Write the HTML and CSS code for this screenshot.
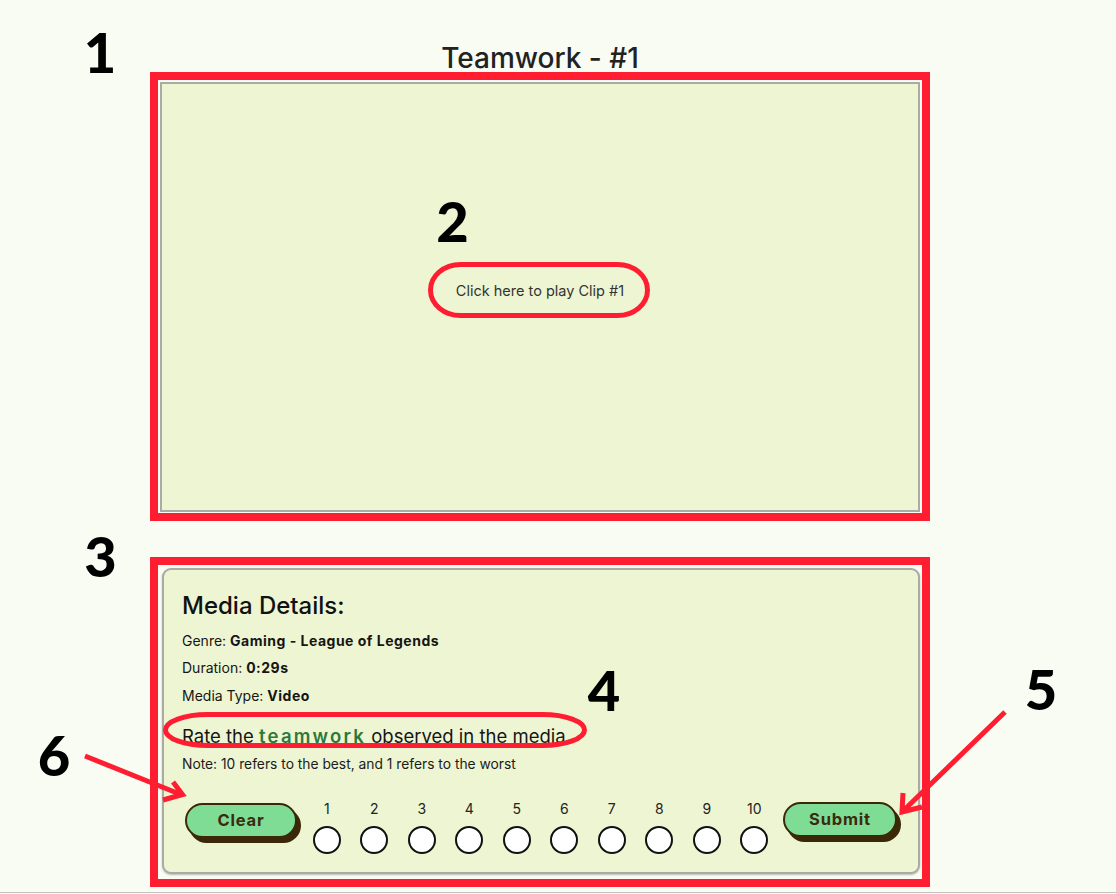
FILE: index.html
```html
<!DOCTYPE html>
<html lang="en">
<head>
<meta charset="utf-8">
<title>Teamwork - #1</title>
<link rel="stylesheet" href="styles.css">
</head>
<body>
<div class="page">
  <main class="column">
    <h1 class="title">Teamwork - #1</h1>

    <section class="frame frame-video">
      <div class="video-panel">
        <button class="play-btn" type="button">Click here to play Clip #1</button>
      </div>
    </section>

    <section class="frame frame-details">
      <div class="details-panel">
        <h2 class="details-title">Media Details:</h2>
        <p class="meta">Genre: <b>Gaming - League of Legends</b></p>
        <p class="meta">Duration: <b>0:29s</b></p>
        <p class="meta">Media Type: <b>Video</b></p>
        <p class="rate">Rate the <span class="accent">teamwork</span> observed in the media</p>
        <p class="note">Note: 10 refers to the best, and 1 refers to the worst</p>

        <div class="rating-row">
          <button class="pill pill-clear" type="button">Clear</button>
          <div class="scale">
            <label class="opt"><span class="num">1</span><span class="dot"></span></label>
            <label class="opt"><span class="num">2</span><span class="dot"></span></label>
            <label class="opt"><span class="num">3</span><span class="dot"></span></label>
            <label class="opt"><span class="num">4</span><span class="dot"></span></label>
            <label class="opt"><span class="num">5</span><span class="dot"></span></label>
            <label class="opt"><span class="num">6</span><span class="dot"></span></label>
            <label class="opt"><span class="num">7</span><span class="dot"></span></label>
            <label class="opt"><span class="num">8</span><span class="dot"></span></label>
            <label class="opt"><span class="num">9</span><span class="dot"></span></label>
            <label class="opt"><span class="num">10</span><span class="dot"></span></label>
          </div>
          <button class="pill pill-submit" type="button">Submit</button>
        </div>
      </div>
    </section>
  </main>

  <svg class="annotations" width="1116" height="894" viewBox="0 0 1116 894" xmlns="http://www.w3.org/2000/svg">
    <g class="marks">
      <rect x="430.5" y="264.5" width="217" height="51" rx="30" ry="25.5"/>
      <rect x="165.5" y="714.5" width="419" height="31" rx="42" ry="15.5"/>
      <path d="M85 756 L182 795 M173 782 L182.5 794.5 L163 800"/>
      <path d="M1005 712 L902 812 M903 793 L902 812 L922 807"/>
    </g>
    <g class="labels">
      <text x="100" y="73">1</text>
      <text x="452.5" y="242">2</text>
      <text x="100.5" y="577">3</text>
      <text x="604" y="711">4</text>
      <text x="1041" y="710">5</text>
      <text x="54" y="776">6</text>
    </g>
  </svg>
</div>
</body>
</html>
```

FILE: styles.css
```css
* { box-sizing: border-box; }

html, body {
  margin: 0;
  padding: 0;
  background: #f9fcf2;
}

body {
  font-family: Inter, "Noto Sans", "Liberation Sans", sans-serif;
  color: #1b1b1b;
}

.page {
  position: relative;
  height: 894px;
  overflow: hidden;
}

.page::after {
  content: "";
  position: absolute;
  left: 0;
  right: 0;
  top: 892px;
  height: 1px;
  background: #c2c4bd;
}

.column {
  width: 780px;
  margin-left: 150px;
}

.title {
  margin: 0;
  padding-top: 46px;
  height: 72px;
  font-size: 28px;
  line-height: 24px;
  font-weight: 500;
  text-align: center;
  color: #222;
}

.frame {
  border: 8px solid #ff1e31;
}

.frame-video {
  padding: 2px 2px 1px 2px;
}

.video-panel {
  height: 430px;
  background: #eef5d2;
  border: 2px solid #a9aba4;
  display: flex;
  align-items: center;
  justify-content: center;
  padding-bottom: 14px;
}

.play-btn {
  background: none;
  border: 0;
  padding: 0;
  font-family: Inter, "Noto Sans", sans-serif;
  font-size: 14.5px;
  color: #333;
  cursor: pointer;
}

.frame-details {
  margin-top: 36px;
  padding: 3px 2px 5px 4px;
}

.details-panel {
  background: #eef5d2;
  border: 2px solid #a9aba4;
  border-radius: 9px;
  box-shadow: 0 1px 2px rgba(0, 0, 0, 0.25);
  padding: 22px 18px 18px 18px;
}

.details-title {
  margin: 0 0 6.5px 0;
  font-size: 24px;
  line-height: 28px;
  font-weight: 500;
  color: #111;
}

.meta {
  margin: 0;
  font-size: 14px;
  line-height: 27.5px;
  color: #151515;
}

.meta b {
  font-weight: 700;
  letter-spacing: 0.5px;
}

.rate {
  margin: 14.5px 0 0 0;
  font-size: 18.5px;
  line-height: 24px;
  color: #151515;
}

.accent {
  color: #2b7a3b;
  font-weight: 600;
  letter-spacing: 2.2px;
}

.note {
  margin: 7.8px 0 0 0;
  font-size: 13.8px;
  line-height: 18px;
  color: #1b1b1b;
}

.rating-row {
  margin-top: 26.7px;
  display: flex;
  align-items: flex-start;
}

.pill {
  margin-top: 3px;
  height: 35px;
  border: 2px solid #3b2808;
  border-radius: 18px;
  background: #7edc95;
  box-shadow: 4px 5px 0 #3b2808;
  font-family: Inter, "Noto Sans", sans-serif;
  font-size: 16.5px;
  font-weight: 700;
  letter-spacing: 0.8px;
  color: #3b2a0c;
  padding: 0;
  cursor: pointer;
}

.pill-clear {
  width: 112px;
  margin-left: 3px;
}

.pill-submit {
  width: 114px;
  margin-left: 5px;
  margin-top: 2px;
}

.scale {
  display: flex;
  margin-left: 6px;
}

.opt {
  width: 47.5px;
  display: flex;
  flex-direction: column;
  align-items: center;
}

.num {
  font-size: 14px;
  line-height: 18px;
  color: #222;
}

.dot {
  margin-top: 8px;
  width: 28px;
  height: 28px;
  border-radius: 50%;
  border: 2px solid #111;
  background: #fff;
}

.annotations {
  position: absolute;
  left: 0;
  top: 0;
  pointer-events: none;
}

.marks rect,
.marks path {
  fill: none;
  stroke: #ff1e31;
  stroke-width: 5;
  stroke-linecap: butt;
  stroke-linejoin: miter;
}

.labels text {
  font-family: Lato, "DejaVu Sans", sans-serif;
  font-weight: 900;
  font-size: 56px;
  fill: #000;
  text-anchor: middle;
}
```
